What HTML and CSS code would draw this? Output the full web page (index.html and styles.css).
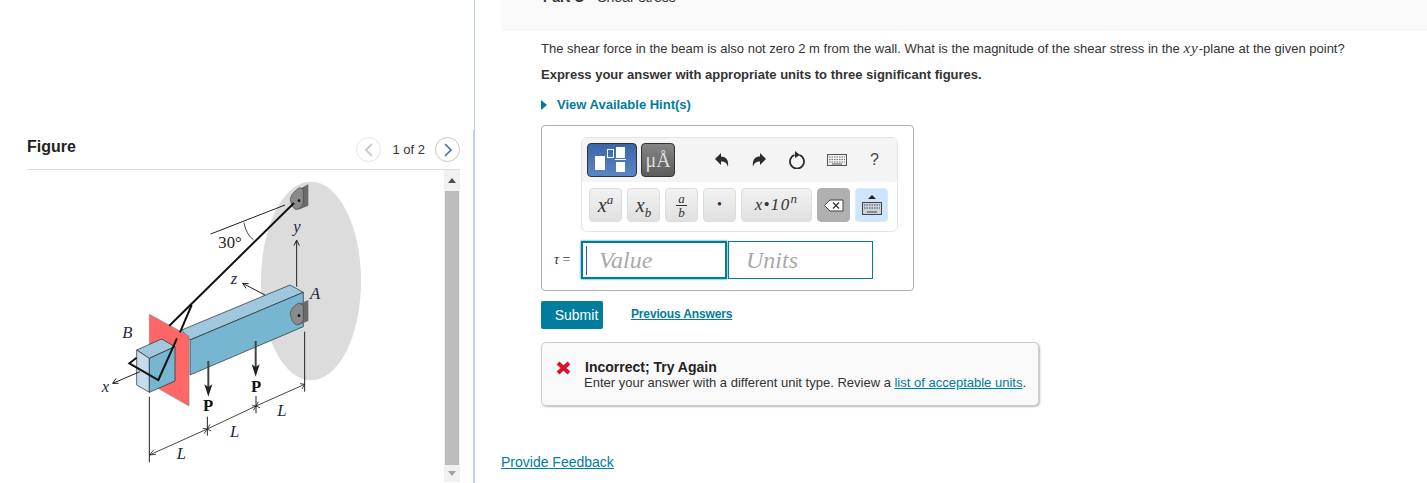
FILE: index.html
```html
<!DOCTYPE html>
<html lang="en">
<head>
    <meta charset="UTF-8">
    <title>Part C - Shear stress</title>
    <link rel="stylesheet" href="styles.css">
</head>
<body>
<div class="page">
    <div class="figure-side">
        <div class="figure-head">
            <h3>Figure</h3>
            <div class="pager">
                <span class="pager-btn off"><svg width="10" height="14" viewBox="0 0 10 14"><path d="M8 1 L2 7 L8 13" fill="none" stroke="#c4ccd4" stroke-width="2"/></svg></span>
                <span class="pager-text">1 of 2</span>
                <span class="pager-btn"><svg width="10" height="14" viewBox="0 0 10 14"><path d="M2 1 L8 7 L2 13" fill="none" stroke="#4a6f94" stroke-width="1.600"/></svg></span>
            </div>
        </div>
        <div class="figure-body">
            <div class="figure-canvas">
                <svg class="beam" width="290" height="300" viewBox="0 0 870 900">
                    <ellipse cx="663" cy="318" rx="150" ry="298" fill="#dcdcdc"/>
                    <!-- upper bracket -->
                    <path d="M628 42 L655 28 L655 92 L625 104 Z" fill="#6b6b6b"/>
                    <path d="M601 72 Q603 55 628 38 L640 42 L640 85 Q632 102 618 104 Q603 98 601 72 Z" fill="#8a8a8a" stroke="#444" stroke-width="2"/>
                    <!-- beam -->
                    <path d="M275 465 L600 330 L640 352 L300 495 Z" fill="#9fc8de" stroke="#222" stroke-width="2"/>
                    <path d="M300 495 L640 352 L640 455 L300 600 Z" fill="#77b6d1" stroke="#222" stroke-width="2"/>
                    <!-- lower bracket -->
                    <path d="M625 388 L655 375 L655 438 L625 450 Z" fill="#6b6b6b"/>
                    <path d="M601 415 Q603 398 625 384 L640 390 L640 436 Q632 450 620 450 Q603 442 601 415 Z" fill="#8a8a8a" stroke="#444" stroke-width="2"/>
                    <circle cx="627" cy="422" r="4" fill="#111"/>
                    <!-- red plate -->
                    <path d="M178 418 L297 483 L297 693 L178 625 Z" fill="#ff6666" stroke="#888" stroke-width="2"/>
                    <!-- end block -->
                    <path d="M140 525 L215 492 L255 515 L178 550 Z" fill="#9fc8de" stroke="#222" stroke-width="2"/>
                    <path d="M140 525 L178 550 L178 652 L140 630 Z" fill="#c5dcea" stroke="#222" stroke-width="2"/>
                    <path d="M178 550 L255 515 L255 618 L178 652 Z" fill="#77b6d1" stroke="#222" stroke-width="2"/>
                    <!-- cable -->
                    <path d="M612 84 L238 452" stroke="#111" stroke-width="6" fill="none"/>
                    <path d="M305 390 L270 472" stroke="#111" stroke-width="6" fill="none"/>
                    <path d="M261 490 L205 615 L118 565 L140 548" stroke="#111" stroke-width="6" fill="none"/>
                    <circle cx="627" cy="77" r="4" fill="#111"/>
                    <!-- angle -->
                    <path d="M362 177 L585 90" stroke="#222" stroke-width="3"/>
                    <path d="M462 143 Q468 178 491 195" stroke="#222" stroke-width="2.500" fill="none"/>
                    <!-- axes -->
                    <path d="M620 335 L620 198 M612 212 L620 195 L628 212" stroke="#222" stroke-width="3" fill="none"/>
                    <path d="M525 360 L458 325 M476 326 L458 325 L468 340" stroke="#222" stroke-width="3" fill="none"/>
                    <path d="M150 590 L68 625 M78 610 L68 625 L86 625" stroke="#222" stroke-width="3" fill="none"/>
                    <!-- loads -->
                    <path d="M355 558 L355 640 M497 498 L497 580" stroke="#444" stroke-width="6"/>
                    <path d="M343 628 L355 665 L367 628 L355 636 Z M485 568 L497 605 L509 568 L497 576 Z" fill="#222"/>
                    <!-- dimensions -->
                    <path d="M178 665 L178 862 M352 725 L352 782 M498 663 L498 715 M644 470 L644 650" stroke="#222" stroke-width="3"/>
                    <path d="M178 840 L352 762 L498 693 L644 628" stroke="#222" stroke-width="2.500" fill="none"/>
                    <path d="M192 824 L178 840 L198 838 M338 760 L352 762 L342 776 M364 768 L352 762 L360 748 M486 692 L498 693 L490 706 M510 698 L498 693 L505 680 M630 626 L644 628 L636 642" stroke="#222" stroke-width="2.500" fill="none"/>
                    <!-- labels -->
                    <text class="fig-num" x="385" y="220">30°</text>
                    <text class="fig-var" x="610" y="172">y</text>
                    <text class="fig-var" x="422" y="326">z</text>
                    <text class="fig-var" x="660" y="371">A</text>
                    <text class="fig-var" x="97" y="489">B</text>
                    <text class="fig-var" x="35" y="650">x</text>
                    <text class="fig-bold" x="339" y="709">P</text>
                    <text class="fig-bold" x="483" y="651">P</text>
                    <text class="fig-var" x="562" y="723">L</text>
                    <text class="fig-var" x="420" y="786">L</text>
                    <text class="fig-var" x="260" y="852">L</text>
                </svg>
            </div>
            <div class="scrollbar">
                <span class="arrow-up"></span>
                <div class="thumb"></div>
                <span class="arrow-down"></span>
            </div>
        </div>
    </div>

    <div class="question-side">
        <div class="part-bar"><div class="part-title"><b>Part C</b><span>Shear stress</span></div></div>
        <div class="question">
            <p class="prompt">The shear force in the beam is also not zero 2 m from the wall. What is the magnitude of the shear stress in the <i class="math">xy</i>-plane at the given point?</p>
            <p class="instruct">Express your answer with appropriate units to three significant figures.</p>
            <p class="hint"><span class="hint-arrow"></span>View Available Hint(s)</p>

            <div class="answer-box">
                <div class="toolbar">
                    <div class="tool-top">
                        <span class="mode mode-blue">
                            <svg width="36" height="26" viewBox="0 0 36 26">
                                <rect x="1" y="9" width="10" height="14" fill="#fff"/>
                                <rect x="13.500" y="2.500" width="6" height="8" fill="none" stroke="#fff"/>
                                <rect x="22" y="0" width="9" height="11" fill="#fff"/>
                                <rect x="21" y="12" width="11" height="1" fill="#fff"/>
                                <rect x="22" y="15" width="9" height="10" fill="#fff"/>
                            </svg>
                        </span>
                        <span class="mode mode-gray">μÅ</span>
                        <div class="tool-icons">
                            <svg width="16" height="16" viewBox="0 0 16 16"><path d="M1 7 L7 1 V4.500 C12 4.500 15 8 14 15 C13 11 11 9.500 7 9.500 V13 Z" fill="#2c2c2c"/></svg>
                            <svg width="16" height="16" viewBox="0 0 16 16"><path d="M15 7 L9 1 V4.500 C4 4.500 1 8 2 15 C3 11 5 9.500 9 9.500 V13 Z" fill="#2c2c2c"/></svg>
                            <svg width="18" height="18" viewBox="0 0 18 18"><path d="M6.500 4 A7 7 0 1 0 11.500 4" fill="none" stroke="#2c2c2c" stroke-width="1.800"/><path d="M7 0 L12 4 L7 7 Z" fill="#2c2c2c"/></svg>
                            <svg width="20" height="12" viewBox="0 0 20 12"><rect x="0.500" y="0.500" width="19" height="11" fill="#eee" stroke="#555"/><path d="M2 3 H18 M2 5.500 H18 M2 8 H18" stroke="#777" stroke-dasharray="1.500 1"/><path d="M5 10 H15" stroke="#555"/></svg>
                            <span class="help">?</span>
                        </div>
                    </div>
                    <div class="tool-bottom">
                        <span class="key key-s"><i>x<sup>a</sup></i></span>
                        <span class="key key-s"><i>x<sub>b</sub></i></span>
                        <span class="key key-s"><i class="frac"><span class="num">a</span><span>b</span></i></span>
                        <span class="key key-s dot">•</span>
                        <span class="key key-w"><i class="sci">x•10<sup>n</sup></i></span>
                        <span class="key key-s key-del">
                            <svg width="20" height="13" viewBox="0 0 20 13"><path d="M0.500 6.500 L6 1 H19 V12 H6 Z" fill="#fff" stroke="#444"/><path d="M9 3.500 L15 9.500 M15 3.500 L9 9.500" stroke="#333" stroke-width="1.200"/></svg>
                        </span>
                        <span class="key key-s key-kb">
                            <svg width="20" height="22" viewBox="0 0 20 22"><path d="M6 5 L10 1 L14 5 Z" fill="#222"/><rect x="0.500" y="8.500" width="19" height="12" fill="#c9d3de" stroke="#444"/><path d="M2 11 H18 M2 14 H18" stroke="#444" stroke-dasharray="1.500 1"/><path d="M5 18 H15" stroke="#444"/></svg>
                        </span>
                    </div>
                </div>
                <div class="input-row">
                    <span class="symbol"><i>τ</i> =</span>
                    <div class="field field-active"><span class="caret"></span>Value</div>
                    <div class="field">Units</div>
                </div>
            </div>

            <div class="actions">
                <button class="submit">Submit</button>
                <a class="prev" href="#">Previous Answers</a>
            </div>

            <div class="feedback">
                <svg class="cross" width="15" height="14" viewBox="0 0 15 14"><path d="M2 2 L13 12 M13 2 L2 12" stroke="#d9122f" stroke-width="4"/></svg>
                <div>
                    <div class="fb-title">Incorrect; Try Again</div>
                    <div class="fb-text">Enter your answer with a different unit type. Review a <a href="#">list of acceptable units</a>.</div>
                </div>
            </div>
        </div>
        <a class="provide" href="#">Provide Feedback</a>
    </div>
</div>
</body>
</html>
```

FILE: styles.css
```css
* {
    box-sizing: border-box;
}
body {
    margin: 0;
    font-family: "Liberation Sans", Arial, sans-serif;
    font-size: 14px;
    color: #333;
    background: #fff;
}
a {
    color: #007c9e;
}
.page {
    display: flex;
    height: 483px;
    overflow: hidden;
}

/* left side */
.figure-side {
    position: relative;
    width: 475px;
    flex: none;
    padding: 134px 14px 0 27px;
    border-right: 1px solid #bcd0e4;
}
.figure-side::after {
    content: "";
    position: absolute;
    right: 0;
    top: 130px;
    bottom: 0;
    width: 1px;
    background: #bcd0e4;
}
.figure-head {
    display: flex;
    justify-content: space-between;
    align-items: center;
    height: 36px;
    padding-bottom: 6px;
    border-bottom: 1px solid #ddd;
}
.figure-head h3 {
    margin: 0 0 4px;
    font-size: 16px;
    color: #222;
}
.pager {
    display: flex;
    align-items: center;
    gap: 10px;
    margin-top: 2px;
}
.pager-btn {
    display: flex;
    align-items: center;
    justify-content: center;
    width: 25px;
    height: 25px;
    border: 1px solid #c8c8c8;
    border-radius: 50%;
}
.pager-btn.off {
    border-color: #e6e6e6;
}
.pager-text {
    font-size: 13px;
    color: #333;
    margin-left: 1px;
}
.figure-body {
    display: flex;
    justify-content: space-between;
    height: 312px;
}
.figure-canvas {
    padding: 5px 0 0 63px;
}
.beam {
    display: block;
}
.fig-var {
    font: italic 50px "Liberation Serif", serif;
    fill: #1c2a44;
}
.fig-num {
    font: 50px "Liberation Serif", serif;
    fill: #222;
}
.fig-bold {
    font: bold 50px "Liberation Serif", serif;
    fill: #111;
}
.scrollbar {
    width: 16px;
    background: #f1f1f1;
    display: flex;
    flex-direction: column;
    align-items: center;
}
.arrow-up, .arrow-down {
    width: 0;
    height: 0;
    border-left: 4px solid transparent;
    border-right: 4px solid transparent;
}
.arrow-up {
    margin: 8px 0;
    border-bottom: 5px solid #505050;
}
.arrow-down {
    margin: 6px 0 0;
    border-top: 5px solid #a3a3a3;
}
.thumb {
    width: 14px;
    height: 274px;
    background: #bdbdbd;
}

/* right side */
.question-side {
    flex: 1;
    padding-left: 26px;
}
.part-bar {
    height: 31px;
    padding-left: 42px;
    background: #f9f9f9;
    margin-bottom: 9px;
    line-height: 0;
    color: #333;
    overflow: hidden;
}
.part-title {
    margin-top: -3px;
}
.part-bar span {
    margin-left: 13px;
}
.question {
    padding-left: 40px;
}
.question p {
    margin: 0;
    line-height: 16px;
}
.prompt {
    font-size: 13px;
    padding-bottom: 10px;
}
.math {
    font-family: "Liberation Serif", serif;
    font-size: 15px;
    letter-spacing: 1px;
}
.instruct {
    font-weight: bold;
    font-size: 13px;
    padding-bottom: 14px;
}
.hint {
    display: flex;
    align-items: center;
    font-weight: bold;
    font-size: 13px;
    color: #007c9e;
}
.hint-arrow {
    width: 0;
    height: 0;
    margin-right: 10px;
    border-top: 5px solid transparent;
    border-bottom: 5px solid transparent;
    border-left: 6px solid #007c9e;
}
.answer-box {
    width: 373px;
    height: 166px;
    margin-top: 12px;
    padding: 11px 0 0 39px;
    border: 1px solid #b0b0b0;
    border-radius: 4px;
}
.toolbar {
    width: 317px;
    height: 95px;
    border: 1px solid #e4e4e4;
    border-radius: 6px;
    overflow: hidden;
}
.tool-top {
    display: flex;
    align-items: center;
    height: 44px;
    padding-left: 5px;
    background: #f4f4f4;
}
.mode {
    display: flex;
    align-items: center;
    justify-content: center;
    height: 34px;
    border: 1px solid #333;
    border-radius: 4px;
}
.mode-blue {
    width: 50px;
    margin-right: 4px;
    background: linear-gradient(#3a66a8, #5a86c4);
}
.mode-gray {
    width: 34px;
    color: #ddd;
    font: 20px "Liberation Serif", serif;
    background: linear-gradient(#858585, #5c5c5c);
}
.tool-icons {
    display: flex;
    align-items: center;
    gap: 21px;
    margin-left: 39px;
}
.help {
    font-size: 16px;
    color: #444;
    margin-left: 2px;
}
.tool-bottom {
    display: flex;
    gap: 5px;
    padding: 6px 0 0 7px;
}
.key {
    display: flex;
    align-items: center;
    justify-content: center;
    height: 34px;
    border: 1px solid #ddd;
    border-radius: 4px;
    background: linear-gradient(#f2f2f2, #e0e0e0);
    font: 20px "Liberation Serif", serif;
    color: #333;
}
.key-s {
    width: 33px;
}
.key-w {
    width: 71px;
}
.key sup, .key sub {
    font-size: 13px;
    line-height: 0;
}
.frac {
    display: flex;
    flex-direction: column;
    align-items: center;
    font-size: 13px;
    line-height: 13px;
}
.num {
    border-bottom: 1px solid #333;
    padding: 0 2px;
}
.dot {
    font-size: 14px;
}
.sci {
    font-size: 17px;
    letter-spacing: 1.300px;
}
.key-del {
    background: #b0b0b0;
    border-color: #b0b0b0;
}
.key-kb {
    background: #cfe5fb;
    border-color: #dce8f5;
}
.input-row {
    display: flex;
    align-items: center;
    height: 38px;
    margin: 9px 0 0 -27px;
}
.symbol {
    width: 27px;
    font-size: 14px;
    font-family: "Liberation Serif", serif;
}
.field {
    position: relative;
    width: 145px;
    height: 38px;
    padding-left: 17px;
    border: 1px solid #007c9e;
    font: italic 24px/37px "Liberation Serif", serif;
    color: #a9a9a9;
}
.field-active {
    width: 146px;
    margin-right: 1px;
    padding-left: 16px;
    border-width: 2px;
    line-height: 35px;
    box-shadow: 0 0 2px #007c9e;
}
.caret {
    position: absolute;
    left: 3px;
    top: 3px;
    width: 1px;
    height: 29px;
    background: #3a55b0;
}
.actions {
    display: flex;
    gap: 28px;
    margin-top: 10px;
}
.submit {
    width: 62px;
    height: 28px;
    padding: 0 0 0 9px;
    border: none;
    border-radius: 2px;
    background: #007c9e;
    color: #fff;
    font: 14px "Liberation Sans", Arial, sans-serif;
}
.prev {
    font-size: 12px;
    font-weight: bold;
    letter-spacing: -0.15px;
    margin-top: 6px;
}
.feedback {
    display: flex;
    width: 498px;
    height: 64px;
    margin-top: 13px;
    padding: 17px 0 0 14px;
    gap: 14px;
    background: #f9f9f9;
    border: 1px solid #ccc;
    border-radius: 5px;
    box-shadow: 1px 1px 2px #bbb;
}
.cross {
    flex: none;
    margin-top: 1px;
}
.fb-title {
    font-weight: bold;
    font-size: 14px;
    line-height: 14px;
    color: #222;
}
.fb-text {
    font-size: 13px;
    line-height: 16px;
    margin: 1px 0 0 -1px;
}
.provide {
    display: block;
    margin-top: 48px;
    font-size: 14px;
    width: 113px;
}
```
